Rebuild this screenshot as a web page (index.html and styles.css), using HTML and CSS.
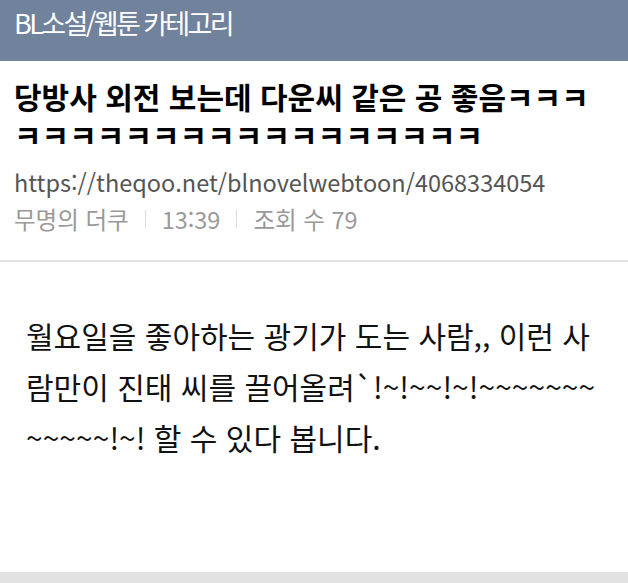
FILE: index.html
```html
<!DOCTYPE html>
<html lang="ko">
<head>
    <meta charset="UTF-8">
    <meta name="viewport" content="width=device-width, initial-scale=1.0">
    <title>BL소설/웹툰 카테고리</title>
    <link rel="stylesheet" href="styles.css">
</head>
<body>
    <div class="cat-bar">BL소설/웹툰 카테고리</div>

    <div class="post-head">
        <h1 class="post-title">당방사 외전 보는데 다운씨 같은 공 좋음ㅋㅋㅋㅋㅋㅋㅋㅋㅋㅋㅋㅋㅋㅋㅋㅋㅋㅋㅋㅋ</h1>
        <div class="post-url">https://theqoo.net/blnovelwebtoon/4068334054</div>
        <div class="post-meta">
            <span>무명의 더쿠</span>
            <span class="sep"></span>
            <span>13:39</span>
            <span class="sep"></span>
            <span>조회 수 79</span>
        </div>
    </div>

    <div class="post-body">
        <p>월요일을 좋아하는 광기가 도는 사람,, 이런 사람만이 진태 씨를 끌어올려`!~!~~!~!~~~~~~~~~~~~!~! 할 수 있다 봅니다.</p>
    </div>

    <div class="bottom-band"></div>
</body>
</html>
```

FILE: styles.css
```css
body {
    margin: 0;
    font-family: "Noto Sans CJK KR", sans-serif;
    background-color: white;
    color: #111;
    overflow: hidden;
}

.cat-bar {
    height: 61px;
    box-sizing: border-box;
    padding: 5px 14px 0;
    background-color: #71829c;
    color: white;
    font-size: 27px;
    letter-spacing: -2.6px;
    line-height: 36px;
}

.post-head {
    padding: 16px 30px 23px 14px;
    border-bottom: 2px solid #e1e1e1;
}

.post-title {
    margin: 0;
    font-size: 30px;
    font-weight: 700;
    line-height: 38px;
    color: #000;
    word-break: break-all;
}

.post-url {
    margin-top: 10px;
    font-size: 23.5px;
    line-height: 38px;
    color: #555;
}

.post-meta {
    display: flex;
    align-items: center;
    gap: 16px;
    font-size: 23.5px;
    line-height: 36px;
    color: #999;
}

.sep {
    width: 1px;
    height: 18px;
    background-color: #ddd;
}

.post-body {
    height: 310px;
    padding: 0 26px;
    box-sizing: border-box;
}

.post-body p {
    margin: 0;
    padding-top: 48px;
    font-size: 30px;
    line-height: 51px;
    color: #111;
    word-break: break-all;
}

.bottom-band {
    height: 20px;
    background-color: #e2e2e2;
}
```
